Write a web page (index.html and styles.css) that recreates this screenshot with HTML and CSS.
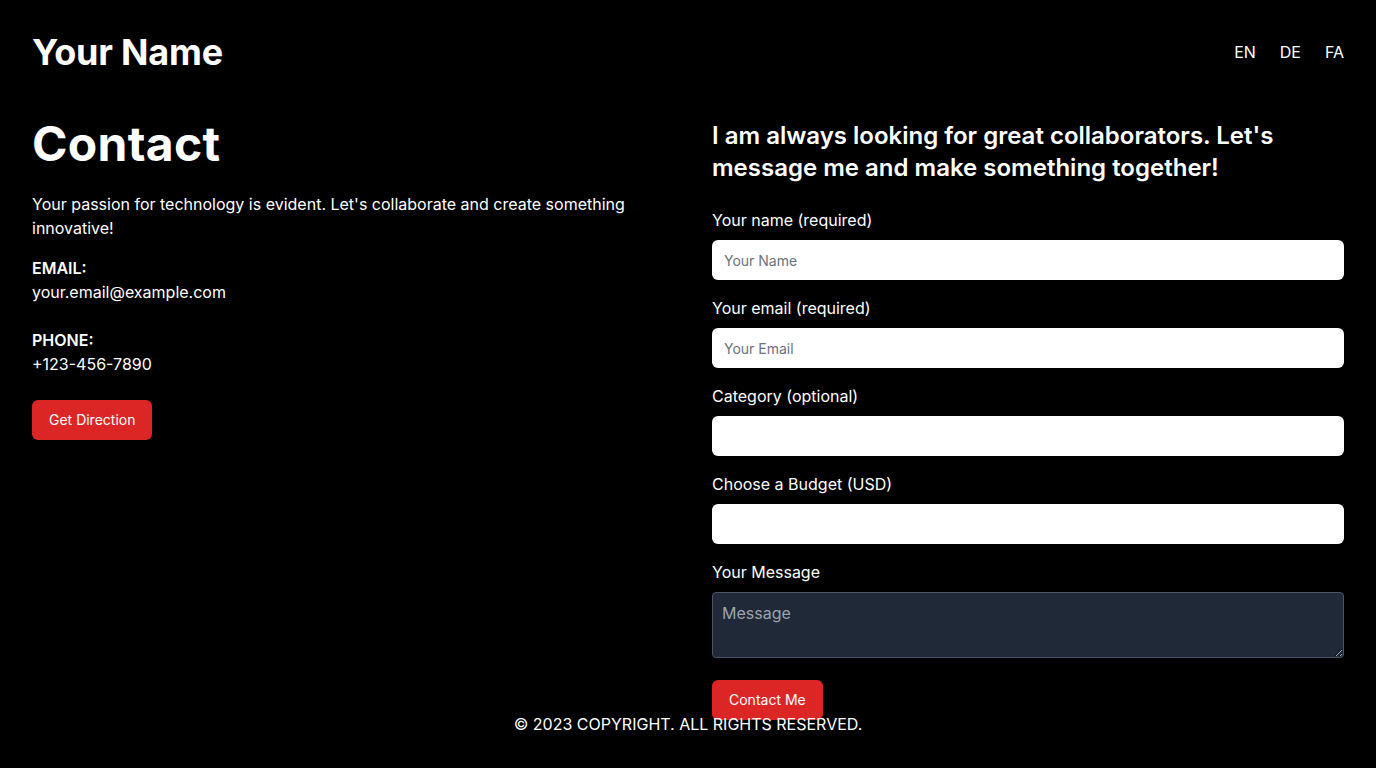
FILE: index.html
```html
<!DOCTYPE html>
<html lang="en">
<head>
<meta charset="utf-8">
<title>Contact</title>
<link rel="stylesheet" href="styles.css">
</head>
<body>
<div class="page">
  <header class="header">
    <div class="brand">Your Name</div>
    <nav class="langs">
      <a href="#">EN</a>
      <a href="#">DE</a>
      <a href="#">FA</a>
    </nav>
  </header>
  <main class="main">
    <section class="info">
      <h1 class="title">Contact</h1>
      <p class="lead">Your passion for technology is evident. Let's collaborate and create something innovative!</p>
      <div class="item">
        <div class="item-label">EMAIL:</div>
        <div class="item-value">your.email@example.com</div>
      </div>
      <div class="item">
        <div class="item-label">PHONE:</div>
        <div class="item-value">+123-456-7890</div>
      </div>
      <button class="btn" type="button">Get Direction</button>
    </section>
    <section class="form-col">
      <h2 class="form-title">I am always looking for great collaborators. Let's message me and make something together!</h2>
      <form class="form">
        <div class="field">
          <label class="label">Your name (required)</label>
          <input class="input" type="text" placeholder="Your Name">
        </div>
        <div class="field">
          <label class="label">Your email (required)</label>
          <input class="input" type="email" placeholder="Your Email">
        </div>
        <div class="field">
          <label class="label">Category (optional)</label>
          <input class="input" type="text">
        </div>
        <div class="field">
          <label class="label">Choose a Budget (USD)</label>
          <input class="input" type="text">
        </div>
        <div class="field field-msg">
          <label class="label">Your Message</label>
          <textarea class="textarea" rows="2" placeholder="Message"></textarea>
        </div>
        <button class="btn" type="button">Contact Me</button>
      </form>
    </section>
  </main>
  <footer class="footer">© 2023 COPYRIGHT. ALL RIGHTS RESERVED.</footer>
</div>
</body>
</html>
```

FILE: styles.css
```css
* { box-sizing: border-box; }
html, body { margin: 0; padding: 0; background: #000; }
body {
  font-family: Inter, "Noto Sans", sans-serif;
  color: #fff;
  font-size: 16px;
  line-height: 24px;
}
.page {
  height: 100vh;
  display: flex;
  flex-direction: column;
}
.header {
  display: flex;
  justify-content: space-between;
  align-items: center;
  padding: 32px 32px 32px;
}
.brand {
  font-size: 36px;
  line-height: 40px;
  font-weight: 700;
  letter-spacing: -0.2px;
}
.langs {
  display: flex;
  gap: 24px;
}
.langs a {
  color: #fff;
  text-decoration: none;
  font-size: 16px;
  line-height: 24px;
}
.main {
  flex: 1 1 0;
  min-height: 0;
  display: grid;
  grid-template-columns: 1fr 1fr;
  column-gap: 48px;
  padding: 16px 32px 0;
  align-items: start;
}
.title {
  margin: 0 0 24px;
  font-size: 48px;
  line-height: 48px;
  font-weight: 700;
  letter-spacing: 0.3px;
}
.lead {
  margin: 0 0 16px;
}
.item { margin-bottom: 24px; }
.item-label { font-weight: 600; }
.btn {
  display: inline-block;
  background: #dc2626;
  color: #fff;
  border: 0;
  border-radius: 6px;
  padding: 10px 17px;
  font-family: inherit;
  font-size: 14px;
  line-height: 20px;
  cursor: pointer;
}
.form-title {
  margin: 0 0 24px;
  font-size: 24px;
  line-height: 32px;
  font-weight: 600;
}
.form { display: flex; flex-direction: column; align-items: flex-start; }
.field {
  width: 100%;
  display: flex;
  flex-direction: column;
  margin-bottom: 16px;
}
.field-msg { margin-bottom: 22px; }
.label { margin-bottom: 8px; }
.input {
  height: 40px;
  border: 0;
  border-radius: 6px;
  background: #fff;
  padding: 0 12px;
  font-family: inherit;
  font-size: 14px;
  color: #111;
}
.input::placeholder { color: #6b7280; }
.textarea {
  height: 66px;
  background: #1f2937;
  border: 1px solid #4b5563;
  border-radius: 4px;
  padding: 8px 9px;
  font-family: inherit;
  font-size: 16px;
  line-height: 24px;
  color: #fff;
  resize: vertical;
}
.textarea::placeholder { color: #9ca3af; }
.footer {
  text-align: center;
  padding: 32px 0;
  font-size: 16px;
  line-height: 24px;
}
```
